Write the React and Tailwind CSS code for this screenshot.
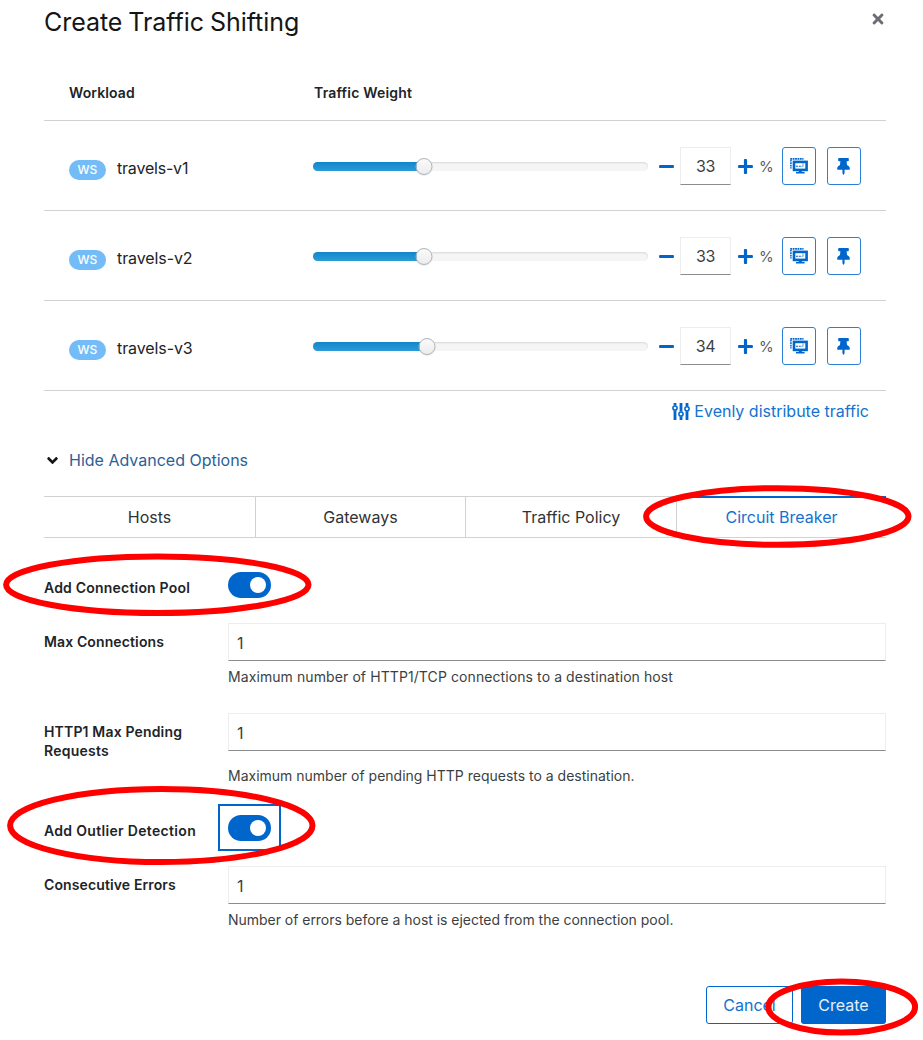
import React from "react";
import { FaAngleDown, FaMinus, FaPlus, FaThumbtack, FaTimes } from "react-icons/fa";

const workloads = [
  { name: "travels-v1", weight: 33, tracking: "tracking-[-0.2px]" },
  { name: "travels-v2", weight: 33, tracking: "tracking-[-0.1px]" },
  { name: "travels-v3", weight: 34, tracking: "tracking-[-0.1px]" },
];

function MirrorIcon() {
  return (
    <svg width="18" height="16" viewBox="0 0 18 16" fill="none" stroke="#0066cc">
      <path d="M0.3 0.9H13.5" strokeWidth="1.6" strokeDasharray="1.8 0.6" />
      <path d="M0.9 1.8V10.5" strokeWidth="1.6" strokeDasharray="1.7 0.8" />
      <rect x="4" y="3.9" width="12.6" height="8" strokeWidth="2.6" />
      <path d="M6 8.3H12.4" strokeWidth="1.1" strokeDasharray="2 0.8" />
      <path d="M13 5.6V8.6" strokeWidth="1" strokeDasharray="1 0.8" />
      <path d="M10.3 12V14.6" strokeWidth="3" />
      <path d="M6 14.7H14.6" strokeWidth="1.6" />
    </svg>
  );
}

function EqualizerIcon() {
  return (
    <svg width="18" height="17" viewBox="0 0 18 17" fill="none" stroke="#0066cc">
      <path d="M3 0V2.6M3 7.4V17M9 0V8.6M9 13.4V17M15 0V3.6M15 8.2V17" strokeWidth="2.8" />
      <circle cx="3" cy="5" r="2.1" strokeWidth="1.5" fill="#fff" />
      <circle cx="9" cy="11" r="2.1" strokeWidth="1.5" fill="#fff" />
      <circle cx="15" cy="5.8" r="2.1" strokeWidth="1.5" fill="#fff" />
    </svg>
  );
}

function Slider({ value }) {
  return (
    <div className="relative h-[9px] w-[335px] rounded-full bg-[#f5f5f5] shadow-[inset_0_1px_2px_rgba(0,0,0,0.12)]">
      <div
        className="h-[9px] rounded-l-full bg-linear-to-b from-[#0e87cb] to-[#2b9bd8]"
        style={{ width: `${value}%` }}
      />
      <div
        className="absolute top-[-4px] size-[17px] -translate-x-1/2 rounded-full border border-[#adb3b8] bg-linear-to-b from-[#fafafa] to-[#ececec] shadow-[0_1px_1px_rgba(0,0,0,0.08)]"
        style={{ left: `${value}%` }}
      />
    </div>
  );
}

function WorkloadRow({ name, weight, tracking }) {
  return (
    <div className="flex h-[90px] items-center border-b border-[#d2d2d2] pt-px pl-[25px]">
      <div className="flex w-[244px] items-center pt-[7px]">
        <span className="flex h-[20px] w-[37px] items-center justify-center rounded-full bg-[#73bcf7] text-[12px] font-medium text-white">
          WS
        </span>
        <span className={`ml-[11px] -mt-[3px] text-[16px] ${tracking}`}>{name}</span>
      </div>
      <Slider value={weight} />
      <FaMinus className="ml-[10px] size-[17px] text-[#0066cc]" />
      <div className="ml-[5px] flex h-[38px] w-[51px] items-center justify-center border border-b-[#8a8d90] border-[#ededed] text-[16px] tracking-[-0.3px] text-[#3c3f42]">
        {weight}
      </div>
      <FaPlus className="ml-[6px] size-[17px] text-[#0066cc]" />
      <span className="ml-[5px] w-[13px] pt-[2px] text-[15px] tracking-[-0.5px] text-[#5a5d60]">%</span>
      <div className="ml-[9.5px] flex h-[38px] w-[34px] items-center justify-center rounded-[3px] border border-[#2b7fd4]">
        <MirrorIcon />
      </div>
      <div className="ml-[11px] flex h-[38px] w-[34px] items-center justify-center rounded-[3px] border border-[#2b7fd4]">
        <FaThumbtack className="h-[17px] w-[13px] text-[#0066cc]" />
      </div>
    </div>
  );
}

function Switch() {
  return (
    <div className="flex h-[26px] w-[43px] items-center justify-end rounded-full bg-[#0066cc] pr-[5px]">
      <div className="size-[16px] rounded-full bg-white" />
    </div>
  );
}

function TextInput({ value }) {
  return (
    <div className="flex h-[38px] w-[658px] items-center border border-b-[#8a8d90] border-[#ededed] pl-[8px] pt-px text-[16px] text-[#3c3f42]">
      {value}
    </div>
  );
}

function Field({ label, children, help, helpClass, className }) {
  return (
    <div className={`flex ${className}`}>
      <div className="w-[184px] pt-[9px] text-[14px] leading-[19px] font-semibold">{label}</div>
      <div className="w-[658px]">
        {children}
        <div className={`text-[14px] leading-[20px] text-[#3c3f42] ${helpClass}`}>{help}</div>
      </div>
    </div>
  );
}

function Highlight({ cx, cy, rx, ry }) {
  return <ellipse cx={cx} cy={cy} rx={rx} ry={ry} fill="none" stroke="#ff0000" strokeWidth="6" />;
}

export default function App() {
  return (
    <div className="relative h-[1040px] w-[923px] overflow-hidden bg-white pr-[37px] pl-[44px] font-['Inter',sans-serif] text-[#212427]">
      <div className="flex h-[65px] items-start justify-between">
        <h1 className="pt-[6px] text-[25px] leading-[32px] tracking-[-0.05px] text-[#151515] [word-spacing:-1px]">
          Create Traffic Shifting
        </h1>
        <FaTimes className="mt-[11px] size-[16px] text-[#6a6e73]" />
      </div>

      <div className="flex h-[56px] items-center border-b border-[#d2d2d2] pl-[25px] text-[14px] font-semibold">
        <div className="w-[245px] tracking-[0.1px]">Workload</div>
        <div className="tracking-[0.2px]">Traffic Weight</div>
      </div>
      {workloads.map((w) => (
        <WorkloadRow key={w.name} {...w} />
      ))}

      <div className="flex h-[40px] items-center justify-end pr-[17px] text-[#1472d0]">
        <EqualizerIcon />
        <span className="ml-[4px] text-[16px]">Evenly distribute traffic</span>
      </div>

      <div className="flex h-[65px] items-center pb-[7px]">
        <FaAngleDown className="size-[17px] text-[#151515]" />
        <span className="ml-[8px] text-[16px] text-[#2b5f98]">Hide Advanced Options</span>
      </div>

      <div className="grid h-[42px] grid-cols-[212px_210px_211px_209px] border-y border-[#d2d2d2] text-[16px] text-[#303336]">
        <div className="flex items-center justify-center border-r border-[#d2d2d2]">Hosts</div>
        <div className="flex items-center justify-center border-r border-[#d2d2d2]">Gateways</div>
        <div className="flex items-center justify-center border-r border-[#d2d2d2]">Traffic Policy</div>
        <div className="-mt-px flex items-center justify-center border-t-2 border-[#0066cc] pb-px text-[#1472d0]">
          Circuit Breaker
        </div>
      </div>

      <div className="flex h-[85px] items-start pt-[34px]">
        <div className="w-[184px] pt-[6px] text-[14px] leading-[20px] font-semibold tracking-[0.2px]">Add Connection Pool</div>
        <Switch />
      </div>

      <Field
        className="h-[90px]"
        label={<span className="tracking-[0.12px]">Max Connections</span>}
        help="Maximum number of HTTP1/TCP connections to a destination host"
        helpClass="mt-[6px] tracking-[0.09px]"
      >
        <TextInput value="1" />
      </Field>
      <Field
        className="h-[91px]"
        label={
          <>
            <span className="tracking-[0.16px]">HTTP1 Max Pending</span>
            <br />
            <span className="tracking-[0.25px]">Requests</span>
          </>
        }
        help="Maximum number of pending HTTP requests to a destination."
        helpClass="mt-[15px]"
      >
        <TextInput value="1" />
      </Field>

      <div className="flex h-[62px] items-start">
        <div className="w-[174px] pt-[17px] text-[14px] leading-[20px] font-semibold tracking-[0.32px]">Add Outlier Detection</div>
        <div className="flex h-[47px] w-[63px] items-center justify-center border-2 border-[#0066cc]">
          <Switch />
        </div>
      </div>

      <Field
        className="h-[120px]"
        label={<span className="tracking-[0.12px]">Consecutive Errors</span>}
        help="Number of errors before a host is ejected from the connection pool."
        helpClass="mt-[6px] tracking-[-0.03px]"
      >
        <TextInput value="1" />
      </Field>

      <div className="flex justify-end gap-[8px] text-[16px]">
        <div className="flex h-[38px] w-[87px] items-center justify-center rounded-[3px] border border-[#0066cc] text-[#1472d0]">
          Cancel
        </div>
        <div className="flex h-[38px] w-[85px] items-center justify-center rounded-[3px] bg-[#0066cc] text-[#e3effa]">
          Create
        </div>
      </div>

      <svg className="pointer-events-none absolute top-0 left-0" width="923" height="1040">
        <Highlight cx={777.3} cy={516.5} rx={131.2} ry={28.3} />
        <Highlight cx={157.3} cy={584.7} rx={151.2} ry={28.3} />
        <Highlight cx={161.3} cy={825.5} rx={151.2} ry={36.6} />
        <Highlight cx={841.7} cy={1007} rx={73.4} ry={25.6} />
      </svg>
    </div>
  );
}
